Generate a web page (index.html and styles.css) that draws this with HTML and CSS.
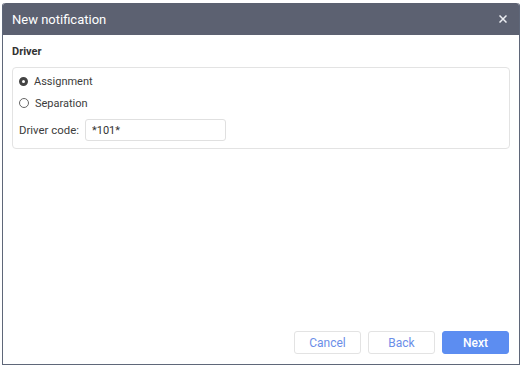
FILE: index.html
```html
<!DOCTYPE html>
<html lang="en">
<head>
    <meta charset="UTF-8">
    <title>New notification</title>
    <link rel="stylesheet" href="styles.css">
</head>
<body>
    <div class="dialog">
        <div class="dialog-header">
            <span class="dialog-title">New notification</span>
            <svg class="dialog-close" width="8" height="8" viewBox="0 0 8 8">
                <path d="M0.5 0.5 L7.5 7.5 M7.5 0.5 L0.5 7.5" stroke="#eceef2" stroke-width="1.5" fill="none"/>
            </svg>
        </div>
        <div class="dialog-body">
            <div class="section-title">Driver</div>
            <div class="group">
                <label class="radio-row">
                    <span class="radio checked"></span>
                    <span>Assignment</span>
                </label>
                <label class="radio-row">
                    <span class="radio"></span>
                    <span>Separation</span>
                </label>
                <div class="field-row">
                    <span class="field-label">Driver code:</span>
                    <input class="field-input" type="text" value="*101*">
                </div>
            </div>
        </div>
        <div class="dialog-footer">
            <button class="btn">Cancel</button>
            <button class="btn">Back</button>
            <button class="btn btn-primary">Next</button>
        </div>
    </div>
</body>
</html>
```
FILE: styles.css
```css
body, html {
    margin: 0;
    padding: 0;
    font-family: Roboto, "Liberation Sans", sans-serif;
    background: #ffffff;
}
.dialog {
    margin: 3px 0 0 2px;
    width: 518px;
    height: 362px;
    border: 1px solid #5f6779;
    border-top: none;
    border-radius: 3px 3px 0 0;
    display: flex;
    flex-direction: column;
    box-sizing: border-box;
    background: #fff;
}
.dialog-header {
    height: 32px;
    background-color: #5c6171;
    color: #fff;
    display: flex;
    align-items: center;
    justify-content: space-between;
    padding: 0 12px 0 9px;
    border-radius: 3px 3px 0 0;
    flex-shrink: 0;
}
.dialog-title {
    font-size: 13px;
}
.dialog-close {
    display: block;
}
.dialog-body {
    flex: 1;
    padding: 10px 9px 0 9px;
}
.section-title {
    font-size: 11px;
    font-weight: bold;
    color: #333;
    margin-bottom: 9px;
}
.group {
    border: 1px solid #e3e3e3;
    border-radius: 4px;
    padding: 2px 6px 7px 6px;
    height: 82px;
    box-sizing: border-box;
}
.radio-row {
    display: flex;
    align-items: center;
    font-size: 11px;
    color: #3c3c3c;
    height: 22px;
}
.radio {
    width: 8px;
    height: 8px;
    border: 1px solid #666;
    border-radius: 50%;
    margin-right: 6px;
    box-sizing: content-box;
}
.radio.checked {
    width: 3px;
    height: 3px;
    border: 3px solid #444;
}
.field-row {
    display: flex;
    align-items: center;
    font-size: 11px;
    color: #3c3c3c;
    margin-top: 5px;
}
.field-label {
    margin-right: 6px;
    font-size: 11.4px;
}
.field-input {
    width: 141px;
    height: 22px;
    box-sizing: border-box;
    border: 1px solid #e0e0e0;
    border-radius: 3px;
    font-family: inherit;
    font-size: 11px;
    color: #333;
    padding: 0 6px;
    outline: none;
}
.dialog-footer {
    display: flex;
    justify-content: flex-end;
    gap: 7px;
    padding: 0 10px 10px 0;
}
.btn {
    width: 67px;
    height: 23px;
    border: 1px solid #e3e3e3;
    border-radius: 3px;
    background: #fff;
    color: #6b8ee8;
    font-family: inherit;
    font-size: 12px;
    cursor: pointer;
}
.btn-primary {
    background: #5c8df1;
    border-color: #5c8df1;
    color: #fff;
    font-weight: 500;
}
```
